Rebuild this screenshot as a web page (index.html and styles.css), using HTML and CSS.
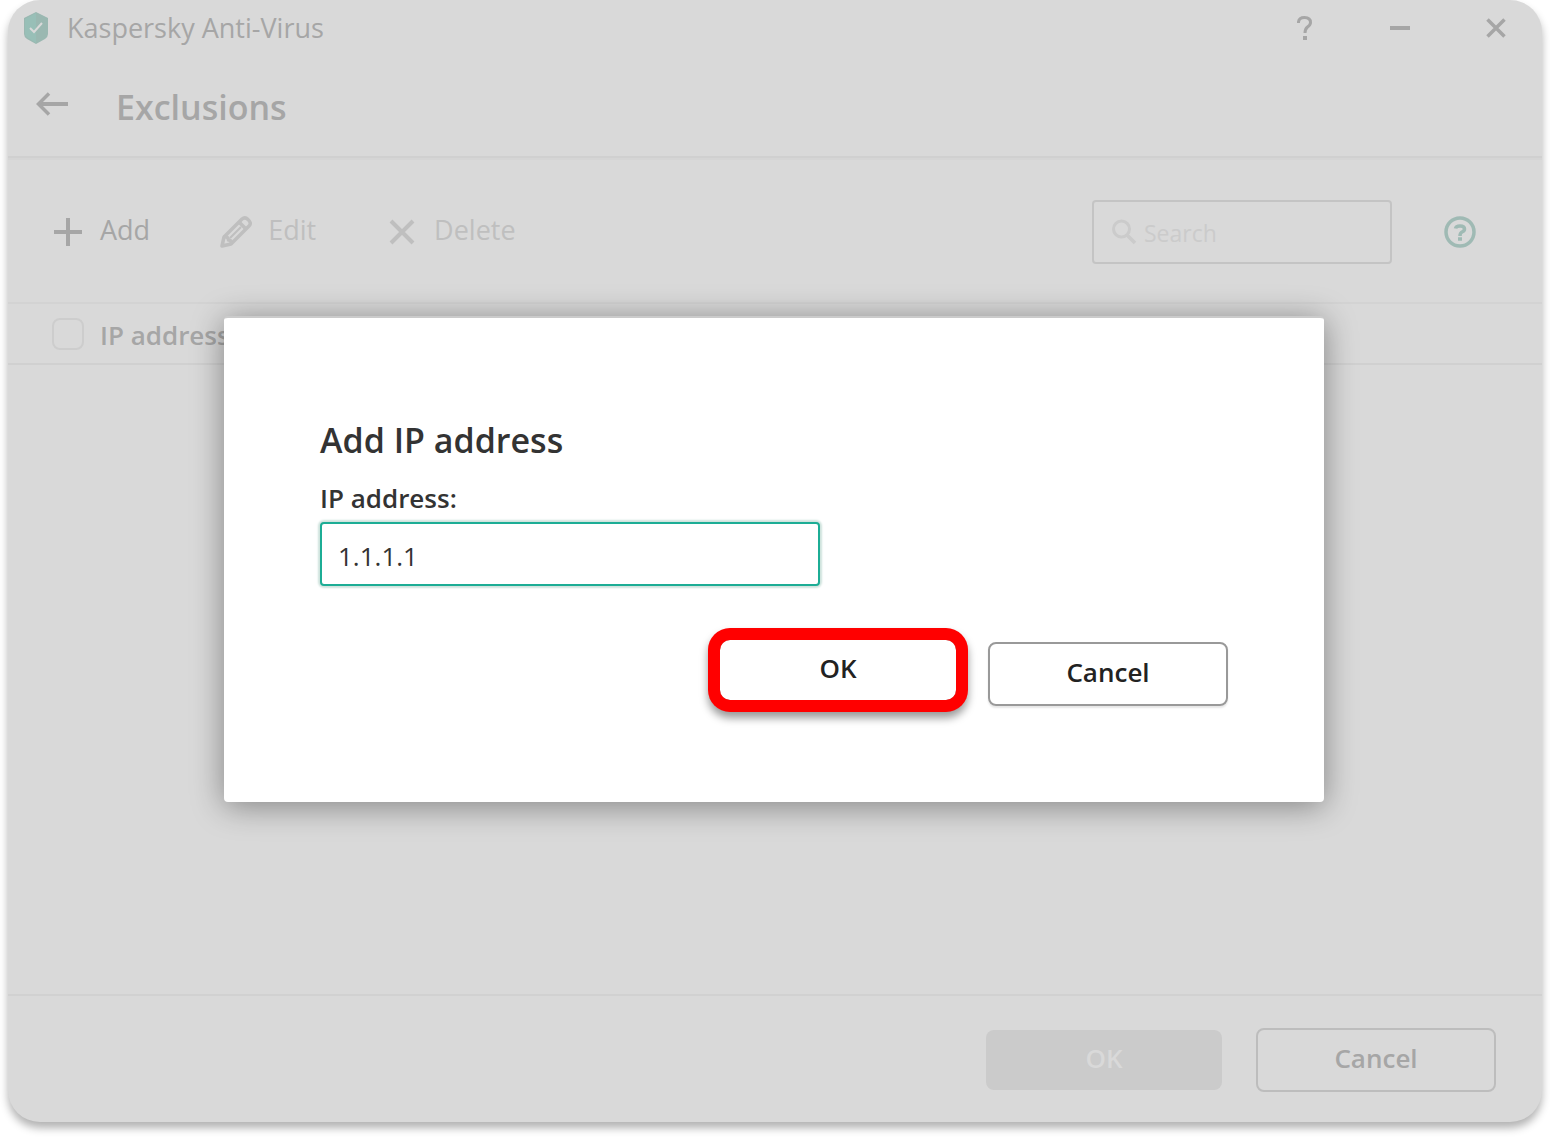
FILE: index.html
```html
<!DOCTYPE html>
<html lang="en">
<head>
  <meta charset="UTF-8">
  <meta name="viewport" content="width=device-width, initial-scale=1.0">
  <title>Kaspersky Anti-Virus</title>
  <link rel="stylesheet" href="styles.css">
</head>
<body>
  <div class="window">
    <div class="titlebar">
      <svg class="logo" width="26" height="32" viewBox="0 0 26 32">
        <path d="M13 0 L25 6 V22 Q25 25 22 27 L13 32 L4 27 Q1 25 1 22 V6 Z" fill="#9ab8b1"/>
        <path d="M13 1 L2 7 V22 Q2 24 5 26 L13 31 Z" fill="#98bfb7"/>
        <path d="M7 16 L11 20 L19 11" fill="none" stroke="#d9d9d9" stroke-width="2"/>
      </svg>
      <div class="app-name">Kaspersky Anti-Virus</div>
      <div class="window-buttons">
        <button class="icon-btn" aria-label="Help">
          <svg width="20" height="28" viewBox="0 0 20 28" fill="none" stroke="#a6a6a6" stroke-width="3">
            <path d="M4.500 9 V8 Q5 3.500 10.500 3.500 Q16.500 3.500 16.500 8.500 Q16.500 11 13.500 13 Q11 15 11 19"/>
            <path d="M9 24 H13" stroke-width="4"/>
          </svg>
        </button>
        <button class="icon-btn" aria-label="Minimize">
          <svg width="20" height="28" viewBox="0 0 20 28"><path d="M0 14 H20" stroke="#a6a6a6" stroke-width="4"/></svg>
        </button>
        <button class="icon-btn" aria-label="Close">
          <svg width="20" height="28" viewBox="0 0 20 28"><path d="M1.500 5.500 L18.500 22.500 M18.500 5.500 L1.500 22.500" stroke="#a6a6a6" stroke-width="3.500"/></svg>
        </button>
      </div>
    </div>

    <div class="header">
      <button class="icon-btn" aria-label="Back">
        <svg width="34" height="24" viewBox="0 0 34 24" fill="none" stroke="#a6a6a6" stroke-width="4">
          <path d="M32 12 H3"/>
          <path d="M13 1.500 L2.500 12 L13 22.500" stroke-width="3.500"/>
        </svg>
      </button>
      <h1>Exclusions</h1>
    </div>

    <div class="toolbar">
      <button class="tool">
        <svg width="32" height="32" viewBox="0 0 32 32"><path d="M16 2 V30 M2 16 H30" stroke="#a6a6a6" stroke-width="4"/></svg>
        <span>Add</span>
      </button>
      <button class="tool" disabled>
        <svg width="32" height="32" viewBox="0 0 32 32" fill="none" stroke="#bfbfbf" stroke-width="3.500" stroke-linejoin="round">
          <path d="M2 30 L4 21 L22 3 Q25 0.500 28 3.500 Q32 7 29 10 L11 28 Z"/>
          <path d="M19 6 L26 13 M4 21 Q8 20 8.500 24 Q12 24 11 28"/>
          <path d="M10 22 L21 11" stroke-width="2"/>
        </svg>
        <span>Edit</span>
      </button>
      <button class="tool" disabled>
        <svg width="32" height="32" viewBox="0 0 32 32"><path d="M5 5 L27 27 M27 5 L5 27" stroke="#bfbfbf" stroke-width="4"/></svg>
        <span>Delete</span>
      </button>
      <label class="search">
        <svg width="26" height="26" viewBox="0 0 26 26" fill="none" stroke="#cbcbcb">
          <circle cx="9.500" cy="10" r="8" stroke-width="3"/>
          <path d="M15 16 L23 24" stroke-width="3.500"/>
        </svg>
        <input type="text" placeholder="Search" aria-label="Search">
      </label>
      <button class="icon-btn" aria-label="About exclusions">
        <svg width="32" height="32" viewBox="0 0 32 32" fill="none" stroke="#9fbab4" stroke-width="3.500">
          <circle cx="16" cy="16" r="14"/>
          <path d="M11.500 12.500 Q12 10 16 10 Q20.500 10 20.500 13 Q20.500 15 18 16 Q16 17 16 20 M14 23 H18"/>
        </svg>
      </button>
    </div>

    <table class="list">
      <thead>
        <tr>
          <th class="check"><input type="checkbox" aria-label="Select all"></th>
          <th>IP address</th>
        </tr>
      </thead>
    </table>

    <div class="footer">
      <button class="btn btn-disabled" disabled>OK</button>
      <button class="btn btn-muted">Cancel</button>
    </div>

    <div class="overlay">
      <form class="modal" role="dialog" aria-labelledby="modal-title">
        <h2 id="modal-title">Add IP address</h2>
        <label for="ip">IP address:</label>
        <input class="ip-input" id="ip" type="text" value="1.1.1.1">
        <div class="modal-buttons">
          <button class="btn btn-marked" type="button">OK</button>
          <button class="btn btn-outline" type="button">Cancel</button>
        </div>
      </form>
    </div>
  </div>
</body>
</html>
```
FILE: styles.css
```css
* {
  box-sizing: border-box;
}
body {
  margin: 0;
  padding: 0 8px 16px;
  background: #fff;
  font-family: 'Open Sans', 'Noto Sans', sans-serif;
  font-size: 26px;
  line-height: 36px;
  color: #a6a6a6;
}
button, input {
  font: inherit;
  color: inherit;
}
button {
  padding: 0;
  border: 0;
  background: none;
  cursor: pointer;
}
svg {
  display: block;
  flex-shrink: 0;
}
.window {
  position: relative;
  display: flex;
  flex-direction: column;
  min-height: calc(100vh - 16px);
  background: #d9d9d9;
  border-radius: 32px;
  box-shadow: 0 6px 8px rgba(0, 0, 0, 0.3);
}
.titlebar {
  display: flex;
  align-items: center;
  height: 56px;
  padding: 0 36px 0 15px;
}
.app-name {
  margin-left: 18px;
  font-size: 27px;
}
.window-buttons {
  display: flex;
  gap: 76px;
  margin-left: auto;
}
.header {
  display: flex;
  align-items: center;
  gap: 46px;
  height: 102px;
  padding: 0 28px 4px;
  border-bottom: 2px solid #d0d0d0;
  box-shadow: 0 2px 0 #d5d5d5;
}
h1, h2 {
  margin: 0;
  font-size: 34px;
  font-weight: 600;
  line-height: 48px;
}
h1 {
  padding-top: 6px;
}
.toolbar {
  display: flex;
  align-items: center;
  height: 146px;
  padding: 4px 66px 0 44px;
  border-bottom: 2px solid #d3d3d3;
}
.tool {
  display: flex;
  align-items: center;
  gap: 16px;
  margin-right: 70px;
  font-size: 27px;
}
.tool span {
  padding-bottom: 4px;
}
.tool:disabled {
  color: #bfbfbf;
}
.search {
  display: flex;
  align-items: center;
  gap: 6px;
  width: 300px;
  height: 64px;
  margin-left: auto;
  margin-right: 52px;
  padding: 0 18px;
  border: 2px solid #c4c4c4;
  border-radius: 4px;
}
.search input {
  flex: 1;
  min-width: 0;
  padding: 2px 0 0;
  border: 0;
  outline: 0;
  background: none;
  font-size: 23px;
}
.search input::placeholder {
  color: #cbcbcb;
}
.list {
  width: 100%;
  border-collapse: collapse;
}
.list th {
  height: 60px;
  padding: 2px 0 0;
  border-bottom: 2px solid #d0d0d0;
  font-weight: 600;
  text-align: left;
}
.list .check {
  width: 92px;
  padding: 0 0 0 44px;
}
.list input {
  display: block;
  appearance: none;
  width: 32px;
  height: 32px;
  margin: 0;
  border: 2px solid #cdcdcd;
  border-radius: 8px;
}
.footer {
  display: flex;
  align-items: center;
  justify-content: flex-end;
  gap: 34px;
  height: 128px;
  margin-top: auto;
  padding: 2px 46px 0;
  border-top: 2px solid #d1d1d1;
}
.btn {
  width: 240px;
  height: 64px;
  padding-bottom: 4px;
  border-radius: 8px;
  font-weight: 600;
}
.btn-disabled {
  width: 236px;
  height: 60px;
  background: #cbcbcb;
  color: #d9d9d9;
}
.btn-muted {
  border: 2px solid #bdbdbd;
}
.overlay {
  position: absolute;
  inset: 0;
  display: flex;
  align-items: center;
  justify-content: center;
  padding: 0 2px 4px 0;
}
.modal {
  width: 1100px;
  max-width: 90%;
  padding: 98px 96px 96px;
  background: #fff;
  border-top: 2px solid #cbcbcb;
  border-radius: 4px;
  box-shadow: 0 4px 32px rgba(0, 0, 0, 0.4);
  color: #333;
}
.modal label {
  display: block;
  margin: 16px 0 6px;
  font-weight: 600;
}
.ip-input {
  display: block;
  width: 500px;
  max-width: 100%;
  height: 64px;
  padding: 4px 16px 0;
  border: 2px solid #1cad95;
  border-radius: 4px;
  outline: 0;
  box-shadow: 0 0 2px 2px #cfe3dd;
}
.modal-buttons {
  display: flex;
  align-items: flex-end;
  justify-content: flex-end;
  gap: 32px;
  margin-top: 54px;
  color: #222;
}
.btn-marked {
  width: 236px;
  height: 60px;
  margin-bottom: 6px;
  border-radius: 10px;
  box-shadow: 0 0 0 12px #f00, 0 6px 8px 12px rgba(0, 0, 0, 0.4);
}
.btn-outline {
  border: 2px solid #999;
  box-shadow: 0 2px 2px rgba(0, 0, 0, 0.1);
}
```
